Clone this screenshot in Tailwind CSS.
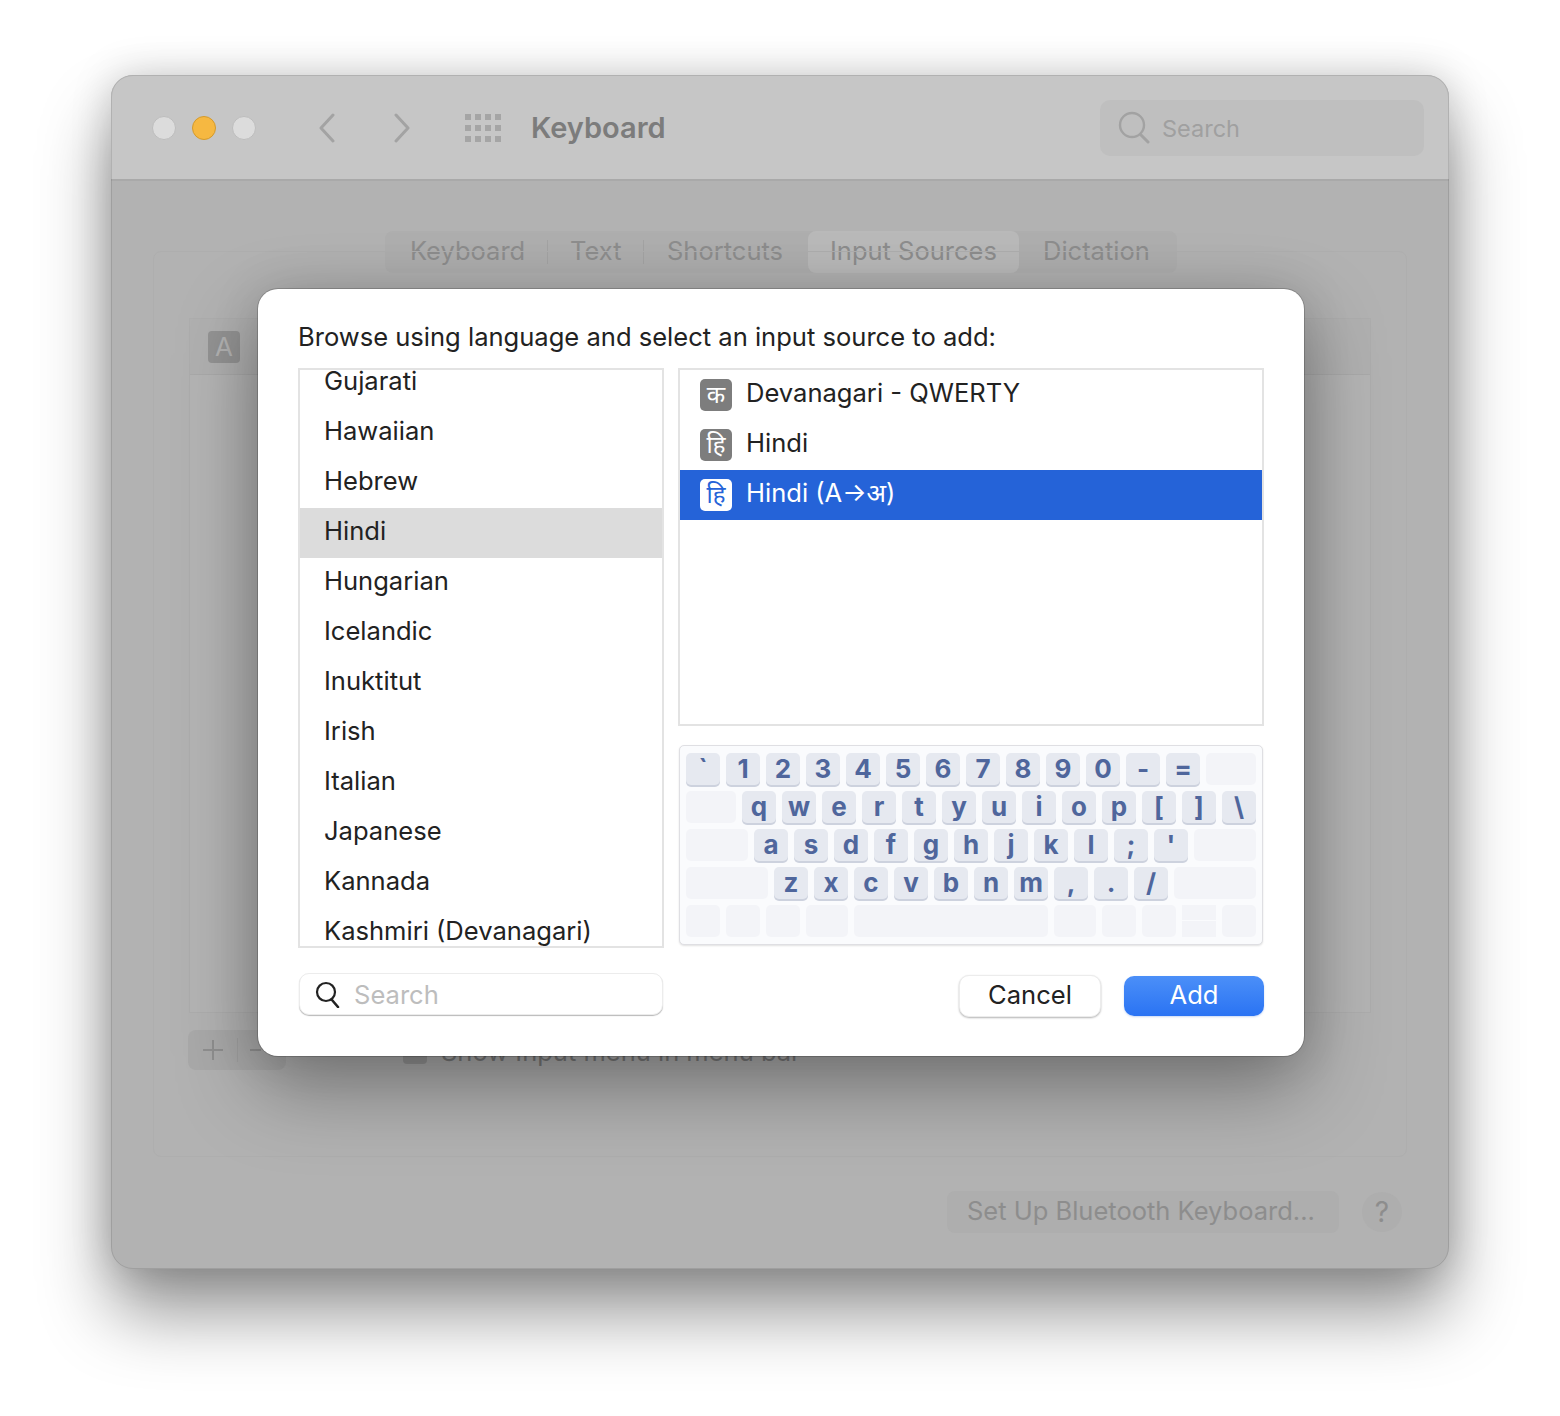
<!DOCTYPE html>
<html lang="en">
  <head>
    <meta charset="UTF-8" />
    <title>Keyboard</title>
    <script src="https://cdn.jsdelivr.net/npm/@tailwindcss/browser@4"></script>
  </head>
  <body class="bg-white h-[1416px] overflow-hidden pt-[75px] pl-[111px] font-['Inter','Noto_Sans','Noto_Sans_CJK_SC',sans-serif]">
    <!-- background window, dimmed by the sheet -->
    <div class="relative w-[1338px] h-[1194px] rounded-[22px] bg-[#b2b2b2] shadow-[0_44px_70px_rgba(0,0,0,0.42),0_0_40px_rgba(0,0,0,0.18)]">
      <div class="h-[106px] rounded-t-[22px] bg-[#c6c6c6] border-b-2 border-[#a9a9a9] flex items-center pl-[41px] pr-[25px] pt-[1px]">
        <div class="flex gap-[16px] items-center">
          <div class="w-[24px] h-[24px] rounded-full bg-[#dcdcdc] border border-[#bdbdbd]"></div>
          <div class="w-[24px] h-[24px] rounded-full bg-[#f6b841] border border-[#d49a2c]"></div>
          <div class="w-[24px] h-[24px] rounded-full bg-[#dcdcdc] border border-[#bdbdbd]"></div>
        </div>
        <svg class="ml-[62px]" width="18" height="30" viewBox="0 0 18 30" fill="none" stroke="#a3a3a3" stroke-width="3" stroke-linecap="round" stroke-linejoin="round"><path d="M15 2 3 15l12 13" /></svg>
        <svg class="ml-[57px]" width="18" height="30" viewBox="0 0 18 30" fill="none" stroke="#a3a3a3" stroke-width="3" stroke-linecap="round" stroke-linejoin="round"><path d="m3 2 12 13L3 28" /></svg>
        <div class="ml-[54px] grid grid-cols-4 gap-x-[4px] gap-y-[5px]">
          <i class="w-[6px] h-[6px] bg-[#a5a5a5]"></i><i class="w-[6px] h-[6px] bg-[#a5a5a5]"></i><i class="w-[6px] h-[6px] bg-[#a5a5a5]"></i><i class="w-[6px] h-[6px] bg-[#a5a5a5]"></i>
          <i class="w-[6px] h-[6px] bg-[#a5a5a5]"></i><i class="w-[6px] h-[6px] bg-[#a5a5a5]"></i><i class="w-[6px] h-[6px] bg-[#a5a5a5]"></i><i class="w-[6px] h-[6px] bg-[#a5a5a5]"></i>
          <i class="w-[6px] h-[6px] bg-[#a5a5a5]"></i><i class="w-[6px] h-[6px] bg-[#a5a5a5]"></i><i class="w-[6px] h-[6px] bg-[#a5a5a5]"></i><i class="w-[6px] h-[6px] bg-[#a5a5a5]"></i>
        </div>
        <div class="ml-[30px] text-[29px] font-semibold text-[#7c7c7c] leading-none">Keyboard</div>
        <div class="ml-auto w-[324px] h-[56px] rounded-[10px] bg-[#bfbfbf] flex items-center pl-[18px] gap-[12px]">
          <svg width="32" height="34" viewBox="0 0 32 34" fill="none" stroke="#a2a2a2" stroke-width="2.4" stroke-linecap="round"><circle cx="14" cy="14" r="12" /><path stroke-width="3" d="m23 24 7 7" /></svg>
          <span class="text-[23.5px] text-[#a0a0a0] mt-[3px]">Search</span>
        </div>
      </div>
      <div class="absolute inset-0 rounded-[22px] border border-black/10"></div>

      <!-- tabs -->
      <div class="absolute left-[274px] top-[156px] w-[792px] h-[42px] rounded-[8px] bg-[#aeaeae] flex items-center text-[25.5px] text-[#8d8d8d] pb-[1px]">
        <div class="pl-[25px] w-[162px]">Keyboard</div>
        <div class="w-px h-[24px] bg-[#a3a3a3]"></div>
        <div class="pl-[22px] w-[95px]">Text</div>
        <div class="w-px h-[24px] bg-[#a3a3a3]"></div>
        <div class="pl-[23px] w-[164px]">Shortcuts</div>
        <div class="w-[211px] h-[42px] rounded-[8px] bg-[#b9b9b9] pl-[22px] flex items-center pb-[1px]">Input Sources</div>
        <div class="pl-[24px]">Dictation</div>
      </div>

      <!-- panels behind the sheet -->
      <div class="absolute left-[42px] top-[176px] w-[1254px] h-[906px] rounded-[8px] border border-[#aeaeae]"></div>
      <div class="absolute left-[78px] top-[243px] w-[1182px] h-[695px] border border-[#adadad] bg-[#b4b4b4]">
        <div class="h-[56px] bg-[#b0b0b0] border-b border-[#a9a9a9] pl-[18px] flex items-center">
          <div class="w-[32px] h-[32px] rounded-[4px] bg-[#939393] text-[#b2b2b2] text-[26px] flex items-center justify-center">A</div>
        </div>
      </div>
      <div class="absolute left-[77px] top-[955px] w-[98px] h-[40px] rounded-[8px] bg-[#a9a9a9] flex items-center">
        <svg class="ml-[14px]" width="22" height="22" viewBox="0 0 22 22" fill="none" stroke="#8f8f8f" stroke-width="2"><path d="M11 1v20M1 11h20" /></svg>
        <div class="ml-[13px] w-px h-[24px] bg-[#a0a0a0]"></div>
        <div class="ml-[12px] w-[11px] h-[2px] bg-[#8f8f8f]"></div>
      </div>
      <div class="absolute left-[292px] top-[961px] flex items-center gap-[14px] text-[25.5px] leading-[32px] text-[#7c7c7c]">
        <div class="w-[24px] h-[24px] rounded-[4px] bg-[#9a9a9a]"></div>
        <span>Show Input menu in menu bar</span>
      </div>
      <div class="absolute left-[836px] top-[1116px] w-[392px] h-[42px] rounded-[8px] bg-[#aeaeae] flex items-center pl-[20px] pb-[1px] text-[25.5px] text-[#8d8d8d]">Set Up Bluetooth Keyboard...</div>
      <div class="absolute left-[1251px] top-[1117px] w-[40px] h-[40px] rounded-full bg-[#aeaeae] flex items-center justify-center text-[28px] text-[#8d8d8d]">?</div>

      <!-- sheet -->
      <div class="absolute left-[147px] top-[214px] w-[1046px] h-[767px] rounded-[20px] bg-white px-[40px] shadow-[0_0_0_1px_rgba(0,0,0,0.18),0_32px_80px_rgba(0,0,0,0.34),0_0_50px_rgba(0,0,0,0.12)]">
        <div class="h-[79px] pt-[32px] text-[25.55px] leading-[32px] text-[#222222]">Browse using language and select an input source to add:</div>
        <div class="flex gap-[14px]">
          <div class="w-[366px] h-[580px] border-2 border-[#e3e3e3] overflow-hidden text-[25.55px] text-[#222222]">
            <div class="-mt-[12px]">
              <div class="h-[50px] pl-[24px] pb-[4px] flex items-center">Gujarati</div>
              <div class="h-[50px] pl-[24px] pb-[4px] flex items-center">Hawaiian</div>
              <div class="h-[50px] pl-[24px] pb-[4px] flex items-center">Hebrew</div>
              <div class="h-[50px] pl-[24px] pb-[4px] flex items-center bg-[#dcdcdc]">Hindi</div>
              <div class="h-[50px] pl-[24px] pb-[4px] flex items-center">Hungarian</div>
              <div class="h-[50px] pl-[24px] pb-[4px] flex items-center">Icelandic</div>
              <div class="h-[50px] pl-[24px] pb-[4px] flex items-center">Inuktitut</div>
              <div class="h-[50px] pl-[24px] pb-[4px] flex items-center">Irish</div>
              <div class="h-[50px] pl-[24px] pb-[4px] flex items-center">Italian</div>
              <div class="h-[50px] pl-[24px] pb-[4px] flex items-center">Japanese</div>
              <div class="h-[50px] pl-[24px] pb-[4px] flex items-center">Kannada</div>
              <div class="h-[50px] pl-[24px] pb-[4px] flex items-center">Kashmiri (Devanagari)</div>
            </div>
          </div>
          <div class="w-[586px]">
            <div class="h-[358px] border-2 border-[#e3e3e3] text-[25.55px] text-[#222222]">
              <div class="h-[50px] pl-[20px] flex items-center gap-[14px]">
                <div class="w-[32px] h-[32px] rounded-[5px] bg-[#7d7d7d] text-white text-[24px] flex items-center justify-center">क</div>
                <span class="-mt-[3px]">Devanagari - QWERTY</span>
              </div>
              <div class="h-[50px] pl-[20px] flex items-center gap-[14px]">
                <div class="w-[32px] h-[32px] rounded-[5px] bg-[#7d7d7d] text-white text-[24px] flex items-center justify-center">हि</div>
                <span class="-mt-[3px]">Hindi</span>
              </div>
              <div class="h-[50px] pl-[20px] flex items-center gap-[14px] bg-[#2563d8] text-white">
                <div class="w-[32px] h-[32px] rounded-[5px] bg-white text-[#2563d8] text-[24px] flex items-center justify-center">हि</div>
                <span class="-mt-[3px]">Hindi (A→अ)</span>
              </div>
            </div>
            <div id="keyboard" class="mt-[19px] ml-[1px] w-[584px] h-[200px] rounded-[5px] bg-[#fafbfd] border border-[#dfdfe3] shadow-[0_1px_2px_rgba(0,0,0,0.12)] pt-[7px] pl-[6px] flex flex-col gap-[6px]"></div>
          </div>
        </div>
        <div class="flex items-start mt-[25px]">
          <div class="ml-[1px] w-[364px] h-[42px] rounded-[10px] bg-white border border-[#ececec] shadow-[0_1px_1px_rgba(0,0,0,0.28)] flex items-center pl-[15px] gap-[14px]">
            <svg width="25" height="27" viewBox="0 0 25 27" fill="none" stroke="#222222" stroke-width="2.2" stroke-linecap="round"><circle cx="11" cy="11" r="9" /><path stroke-width="2.6" d="m17 19 6 7" /></svg>
            <span class="text-[25.55px] text-[#bdbdbd] mt-[2px]">Search</span>
          </div>
          <div class="ml-auto mt-[2px] pb-[2px] w-[142px] h-[42px] rounded-[10px] bg-white border border-[#ececec] shadow-[0_1px_2px_rgba(0,0,0,0.3)] flex items-center justify-center text-[25.55px] text-[#222222]">Cancel</div>
          <div class="ml-[23px] mt-[3px] pb-[2px] w-[140px] h-[40px] rounded-[10px] bg-gradient-to-b from-[#4b8ff8] to-[#2a73f3] shadow-[0_1px_2px_rgba(37,99,216,0.25)] flex items-center justify-center text-[25.55px] text-white">Add</div>
        </div>
      </div>
    </div>

    <script>
      // Keyboard rows: [label or "", width]
      const keyOn = "h-[32px] rounded-[5px] bg-[#e6e9f0] shadow-[0_2px_0_#cdd2de] flex items-center justify-center text-[26px] font-bold text-[#4f669c] leading-none";
      const keyOff = "h-[32px] rounded-[5px] bg-[#f3f4f8]";
      const rows = [
        [["`", 34], ..."1234567890-=".split("").map((k) => [k, 34]), ["", 50]],
        [["", 50], ..."qwertyuiop[]\\".split("").map((k) => [k, 34])],
        [["", 62], ..."asdfghjkl;'".split("").map((k) => [k, 34]), ["", 62]],
        [["", 82], ..."zxcvbnm,./".split("").map((k) => [k, 34]), ["", 82]],
        [["", 34], ["", 34], ["", 34], ["", 42], ["", 194], ["", 42], ["", 34], ["", 34], ["split", 34], ["", 34]],
      ];
      const keyboard = document.getElementById("keyboard");
      rows.forEach((row) => {
        const rowEl = document.createElement("div");
        rowEl.className = "flex gap-[6px]";
        row.forEach(([label, width]) => {
          const key = document.createElement("div");
          if (label === "split") {
            key.className = "h-[32px] flex flex-col gap-[1px]";
            key.innerHTML = '<div class="h-[15px] bg-[#f3f4f8]"></div><div class="h-[16px] bg-[#f3f4f8]"></div>';
          } else {
            key.className = label ? keyOn : keyOff;
            key.textContent = label;
          }
          key.style.width = width + "px";
          rowEl.appendChild(key);
        });
        keyboard.appendChild(rowEl);
      });
    </script>
  </body>
</html>
